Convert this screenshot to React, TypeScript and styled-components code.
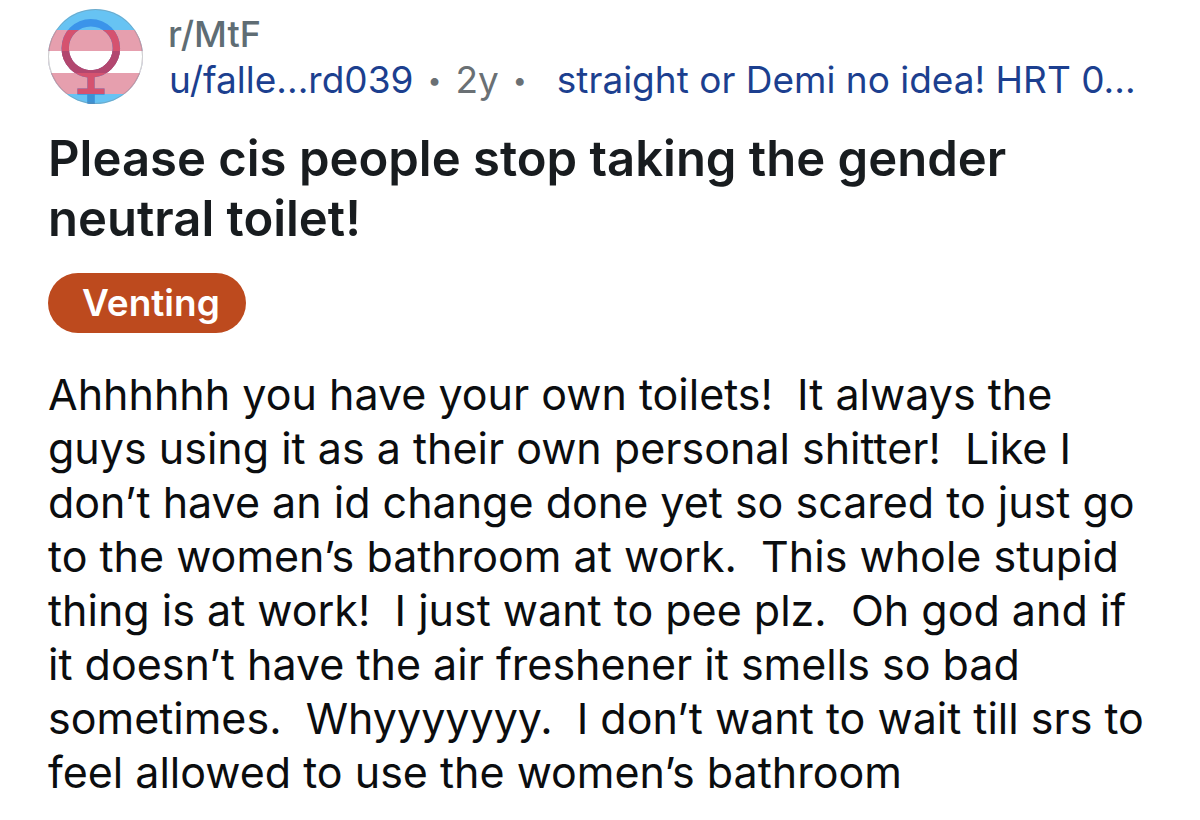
import React from "react";
import styled, { createGlobalStyle } from "styled-components";

const Global = createGlobalStyle`
  * { box-sizing: border-box; }
  body { margin: 0; background: #fff; font-family: Inter, "Liberation Sans", sans-serif; }
`;
const Post = styled.article`
  padding: 8px 48px 24px;
`;
const Header = styled.header`
  display: flex;
  gap: 24px;
`;
const Avatar = styled.svg`
  flex: none;
  width: 96px;
  height: 96px;
`;
const Meta = styled.div`
  flex: 1;
  min-width: 0;
  padding-top: 3px;
`;
const Community = styled.a`
  display: block;
  font-size: 36px;
  line-height: 46px;
  font-weight: 500;
  color: #5f6d74;
  text-decoration: none;
`;
const Byline = styled.div`
  display: flex;
  align-items: center;
  padding-left: 1px;
  font-size: 37px;
  line-height: 46px;
  white-space: nowrap;
  color: #6a7074;
`;
const Author = styled.a`
  color: #1c3f8f;
  text-decoration: none;
`;
const Dot = styled.span`
  width: 42px;
  font-size: 25px;
  text-align: center;
`;
const Flair = styled.span`
  margin-left: 16px;
  color: #1c3f8f;
`;
const Title = styled.h1`
  margin: 25px 0 24px;
  font-size: 49px;
  line-height: 60px;
  font-weight: 600;
  color: #181c1f;
`;
const Tag = styled.a`
  display: block;
  width: fit-content;
  padding: 0 26px 0 34px;
  border-radius: 30px;
  background: #bd4a1e;
  color: #fff;
  font-size: 37px;
  line-height: 60px;
  font-weight: 600;
  text-decoration: none;
`;
const Body = styled.p`
  margin: 34px 0 0;
  font-size: 43px;
  line-height: 54px;
  white-space: pre-wrap;
  color: #0b0d0f;
`;

function CommunityIcon() {
  return (
    <Avatar viewBox="0 0 96 96" role="img" aria-label="r/MtF">
      <defs>
        <clipPath id="disc"><circle cx="47.5" cy="48.5" r="47.5" /></clipPath>
        <clipPath id="symbol">
          <path
            clipRule="evenodd"
            d="M42.8 11a29.3 29.3 0 1 0 0 58.6a29.3 29.3 0 1 0 0-58.6ZM42.8 18.4a21.9 21.9 0 1 1 0 43.8a21.9 21.9 0 1 1 0-43.8Z"
          />
          <path d="M39.4 69h7.2v11.6h9.9v5.8h-9.9V97h-7.2V86.4H29.4v-5.8h10Z" />
        </clipPath>
      </defs>
      <g clipPath="url(#disc)">
        <rect width="96" height="96" fill="#67c3f3" />
        <rect y="22" width="96" height="64" fill="#e69fae" />
        <rect y="43" width="96" height="22" fill="#fff" />
        <g clipPath="url(#symbol)">
          <rect width="96" height="96" fill="#3b94ea" />
          <rect y="22" width="96" height="64" fill="#d5526f" />
          <rect y="43" width="96" height="22" fill="#b2476f" />
          <rect y="86" width="96" height="10" fill="#3d92d4" />
        </g>
      </g>
      <circle cx="47.5" cy="48.5" r="47" fill="none" stroke="#7a8288" strokeOpacity="0.4" />
    </Avatar>
  );
}

export default function App() {
  return (
    <>
      <Global />
      <Post>
        <Header>
          <CommunityIcon />
          <Meta>
            <Community href="#">r/MtF</Community>
            <Byline>
              <Author href="#">u/falle...rd039</Author>
              <Dot>•</Dot>
              <span>2y</span>
              <Dot>•</Dot>
              <Flair>straight or Demi no idea! HRT 0...</Flair>
            </Byline>
          </Meta>
        </Header>
        <Title>Please cis people stop taking the gender neutral toilet!</Title>
        <Tag href="#">Venting</Tag>
        <Body>Ahhhhhh you have your own toilets!  It always the guys using it as a their own personal shitter!  Like I don’t have an id change done yet so scared to just go to the women’s bathroom at work.  This whole stupid thing is at work!  I just want to pee plz.  Oh god and if it doesn’t have the air freshener it smells so bad sometimes.  Whyyyyyyy.  I don’t want to wait till srs to feel allowed to use the women’s bathroom</Body>
      </Post>
    </>
  );
}
